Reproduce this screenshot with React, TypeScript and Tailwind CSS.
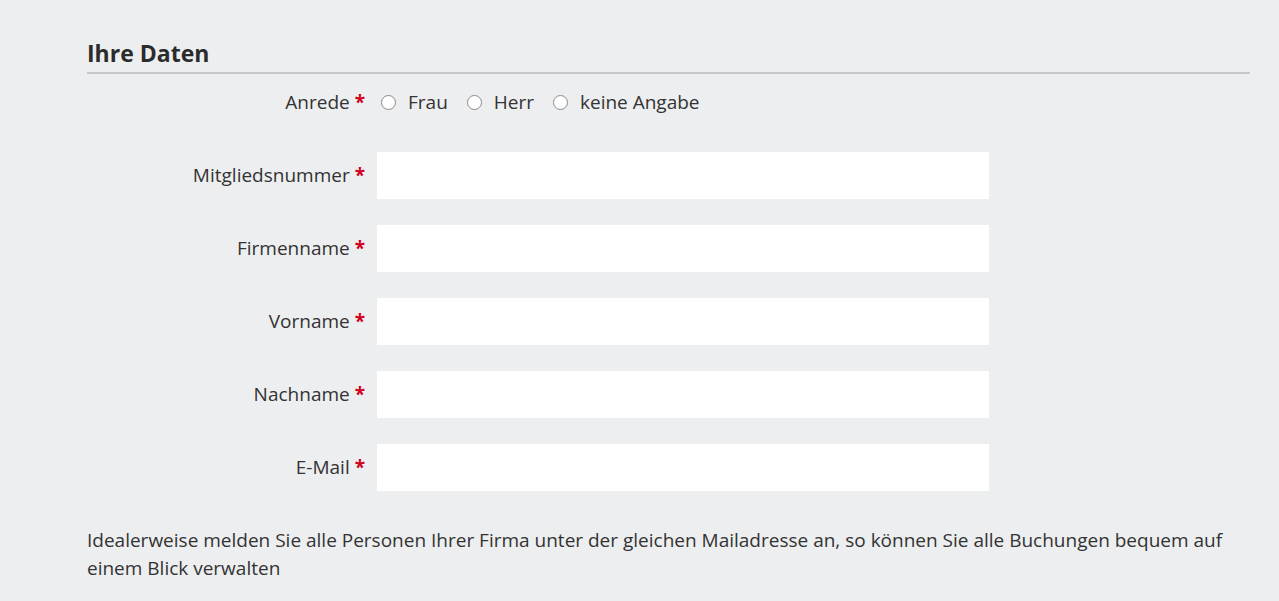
const FIELDS = ['Mitgliedsnummer', 'Firmenname', 'Vorname', 'Nachname', 'E-Mail']

function Label({ text }: { text: string }) {
  return (
    <label className="text-right text-[19px] text-[#333]">
      {text} <span className="font-bold text-[#d0021b]">*</span>
    </label>
  )
}

export default function App() {
  return (
    <div
      className="min-h-[601px] bg-[#edeef0] pl-[87px] pr-[29px] pt-[38px]"
      style={{ fontFamily: '"Open Sans", sans-serif' }}
    >
      <h2 className="border-b-2 border-[#c8c8c8] pb-[4px] text-[23px] font-bold leading-[30px] text-[#2b2b2b]">
        Ihre Daten
      </h2>

      <div className="mt-[14px] grid grid-cols-[278px_612px] items-center gap-x-[12px]">
        <Label text="Anrede" />
        <div className="flex h-[24px] items-center text-[19px] text-[#333]">
          {['Frau', 'Herr', 'keine Angabe'].map((o) => (
            <label key={o} className="mr-[15px] flex items-center">
              <span className="ml-[4px] mr-[12px] inline-block h-[15px] w-[15px] rounded-full border border-[#8a8a8a] bg-white" />
              {o}
            </label>
          ))}
        </div>
      </div>

      <div className="mt-[35px] grid grid-cols-[278px_612px] items-center gap-x-[12px] gap-y-[26px]">
        {FIELDS.map((f) => (
          <div key={f} className="contents">
            <Label text={f} />
            <input className="h-[47px] w-full bg-white outline-none" />
          </div>
        ))}
      </div>

      <p className="mt-[35px] text-[19px] leading-[28px] text-[#333]">
        Idealerweise melden Sie alle Personen Ihrer Firma unter der gleichen Mailadresse an, so können Sie alle Buchungen bequem auf einem Blick verwalten
      </p>
    </div>
  )
}
